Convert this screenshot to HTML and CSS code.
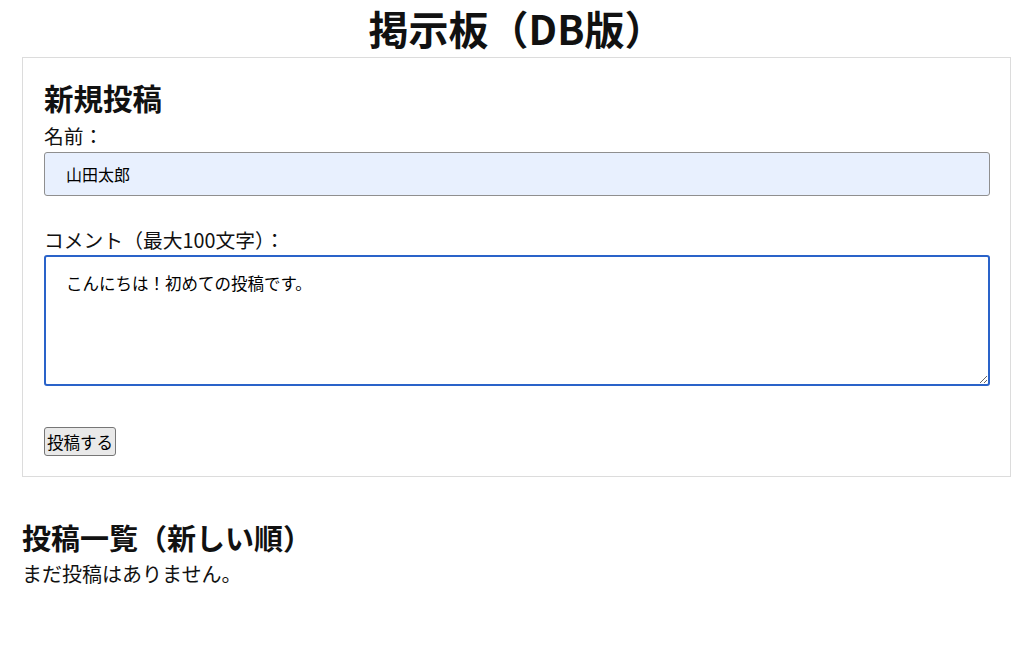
FILE: index.html
```html
<!DOCTYPE html>
<html lang="ja">
<head>
<meta charset="utf-8">
<title>掲示板（DB版）</title>
<link rel="stylesheet" href="styles.css">
</head>
<body>
<h1 class="title">掲示板（DB版）</h1>
<section class="card">
  <h2 class="card-title">新規投稿</h2>
  <form class="post-form">
    <label class="field-label" for="name">名前：</label>
    <input class="name-input" id="name" type="text" value="山田太郎">
    <label class="field-label comment-label" for="comment">コメント（最大100文字）：</label>
    <textarea class="comment-input" id="comment">こんにちは！初めての投稿です。</textarea>
    <div class="actions"><button class="submit-btn" type="button">投稿する</button></div>
  </form>
</section>
<h2 class="list-title">投稿一覧（新しい順）</h2>
<p class="empty">まだ投稿はありません。</p>
</body>
</html>
```
FILE: styles.css
```css
html, body {
  margin: 0;
  padding: 0;
  background: #fff;
}
body {
  padding: 0 13px 0 22px;
  font-family: "Noto Sans CJK JP", "Noto Sans", sans-serif;
  color: #111;
  font-size: 20px;
}
.title {
  margin: 0;
  text-align: center;
  font-size: 40px;
  line-height: 57px;
  font-weight: 700;
}
.card {
  border: 1px solid #dcdcdc;
  padding: 22px 20px 20px 21px;
}
.card-title {
  margin: 0 0 10px;
  font-size: 29.5px;
  line-height: 34px;
  font-weight: 700;
}
.post-form {
  display: flex;
  flex-direction: column;
}
.field-label {
  font-size: 19.8px;
  line-height: 24px;
  margin-bottom: 4px;
}
.comment-label {
  margin-top: 32px;
  margin-bottom: 3px;
}
.name-input {
  box-sizing: border-box;
  height: 44px;
  margin: 0;
  padding: 0 21px;
  background: #e8f0fe;
  border: 1px solid #8f8f8f;
  border-radius: 3px;
  font-family: inherit;
  font-size: 16px;
  color: #000;
  outline: none;
}
.comment-input {
  box-sizing: border-box;
  height: 131px;
  margin: 0;
  padding: 16px 20px;
  border: 2px solid #2a63c9;
  border-radius: 3px;
  font-family: inherit;
  font-size: 16.5px;
  line-height: 20px;
  color: #000;
  outline: none;
  resize: vertical;
}
.actions {
  margin-top: 41px;
  display: flex;
}
.submit-btn {
  box-sizing: border-box;
  font-family: inherit;
  font-size: 16.5px;
  line-height: 20px;
  padding: 2px 2px;
  height: 29px;
  background: #e9e9e9;
  border: 1px solid #767676;
  border-radius: 3px;
  color: #000;
}
.list-title {
  margin: 42px 0 0;
  font-size: 29px;
  line-height: 36px;
  font-weight: 700;
}
.empty {
  margin: 7px 0 0;
  font-size: 20px;
  line-height: 24px;
}
```
